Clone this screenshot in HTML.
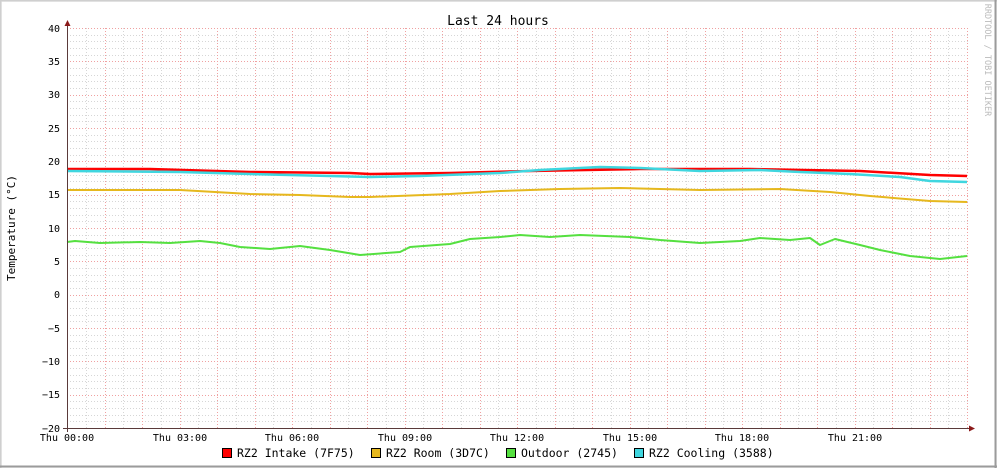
<!DOCTYPE html><html><head><style>
html,body{margin:0;padding:0;background:#fff}
svg{display:block}
text{font-family:"DejaVu Sans Mono","Liberation Mono",monospace;fill:#000}
</style></head><body>
<svg width="997" height="468" viewBox="0 0 997 468" xmlns="http://www.w3.org/2000/svg">
<rect x="0" y="0" width="997" height="468" fill="#f3f3f3"/>
<rect x="2" y="2" width="993" height="464" fill="#fff"/>
<path d="M0 0.5H997M0.5 0V468" stroke="#cfcfcf" stroke-width="2"/>
<path d="M0 466.5H997M995.5 0V468" stroke="#9b9b9b" stroke-width="2"/>
<script>
(function(){
var s='',r='',mv='',rv='';
for(var i=0;i<=60;i++){var y=28+i*400/60;y=Math.round(y)+0.5;if(i%5==0)r+='M67 '+y+'H968';else s+='M67 '+y+'H968';}
for(var j=1;j<=48;j++){var x=Math.round(67+j*18.75)+0.5;if(j%2==0)rv+='M'+x+' 28V428';else mv+='M'+x+' 28V428';}
var ns='http://www.w3.org/2000/svg',svg=document.currentScript.parentNode;
function p(d,c){var e=document.createElementNS(ns,'path');e.setAttribute('d',d);e.setAttribute('stroke',c);e.setAttribute('stroke-dasharray','1,2');e.setAttribute('fill','none');svg.insertBefore(e,document.getElementById('data'));}
p(s+mv,'#d6d6d6');p(r+rv,'#f0a0a0');
})();
</script>
<g id="data" fill="none" stroke-linejoin="round">
<polyline stroke="#ff0000" stroke-width="2.5" points="67,169 150,169 250,172 350,173 370,174 450,173 530,171 640,169 750,169 860,171 930,175 967,176"/>
<polyline stroke="#3fd6df" stroke-width="2.5" points="67,171 180,172 250,174 330,176 370,177 420,176 500,173 540,170 600,167 640,168 700,171 760,170 800,172 850,174 900,177 930,181 967,182"/>
<polyline stroke="#e6b81e" stroke-width="2" points="67,190 180,190 250,194 300,195 350,197 370,197 450,194 500,191 560,189 620,188 700,190 780,189 830,192 870,196 930,201 967,202"/>
<polyline stroke="#55e040" stroke-width="2" points="67,242 75,241 100,243 140,242 170,243 200,241 220,243 240,247 270,249 300,246 330,250 360,255 400,252 410,247 450,244 470,239 500,237 520,235 550,237 580,235 630,237 660,240 700,243 740,241 760,238 790,240 810,238 820,245 835,239 860,245 880,250 910,256 940,259 967,256"/>
</g>
<path d="M67.5 24V432M63 428.5H971" stroke="#5a3a3a" stroke-width="1"/>
<path d="M64.5 26L67.5 20L70.5 26Z M969 425.5L975 428.5L969 431.5Z" fill="#8b1a1a"/>
<g font-size="10" text-anchor="end">
<text x="60" y="32">40</text><text x="60" y="65">35</text><text x="60" y="98">30</text><text x="60" y="132">25</text><text x="60" y="165">20</text><text x="60" y="198">15</text><text x="60" y="232">10</text><text x="60" y="265">5</text><text x="60" y="298">0</text><text x="60" y="332">−5</text><text x="60" y="365">−10</text><text x="60" y="398">−15</text><text x="60" y="432">−20</text>
</g>
<g font-size="10" text-anchor="middle">
<text x="67" y="441">Thu 00:00</text><text x="180" y="441">Thu 03:00</text><text x="292" y="441">Thu 06:00</text><text x="405" y="441">Thu 09:00</text><text x="517" y="441">Thu 12:00</text><text x="630" y="441">Thu 15:00</text><text x="742" y="441">Thu 18:00</text><text x="855" y="441">Thu 21:00</text>
</g>
<text x="498" y="25" font-size="13" text-anchor="middle">Last 24 hours</text>
<text transform="translate(15,228) rotate(-90)" font-size="11" text-anchor="middle">Temperature (°C)</text>
<text transform="translate(985,60) rotate(90)" font-size="8.5" style="fill:#bbb" text-anchor="middle">RRDTOOL / TOBI OETIKER</text>
<g font-size="11.5">
<rect x="222.5" y="448.5" width="9" height="9" fill="#ff0000" stroke="#000"/><text x="237" y="457">RZ2 Intake (7F75)</text>
<rect x="371.5" y="448.5" width="9" height="9" fill="#e6b81e" stroke="#000"/><text x="386" y="457">RZ2 Room (3D7C)</text>
<rect x="506.5" y="448.5" width="9" height="9" fill="#55e040" stroke="#000"/><text x="521" y="457">Outdoor (2745)</text>
<rect x="634.5" y="448.5" width="9" height="9" fill="#3fd6df" stroke="#000"/><text x="649" y="457">RZ2 Cooling (3588)</text>
</g>
</svg>
</body></html>
